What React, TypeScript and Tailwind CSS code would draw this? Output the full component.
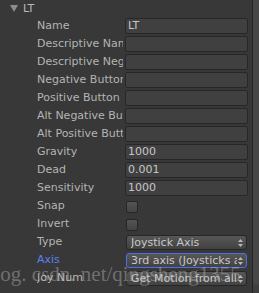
import React from "react";

const font = { fontFamily: '"DejaVu Sans", "Liberation Sans", sans-serif' };

function Arrows() {
  return (
    <svg width="5" height="8" viewBox="0 0 5 8" className="shrink-0">
      <path d="M2.5 0 L5 3 L0 3 Z" fill="#b8b8b8" />
      <path d="M0 5 L5 5 L2.5 8 Z" fill="#b8b8b8" />
    </svg>
  );
}

function Label({ text, active }: { text: string; active?: boolean }) {
  return (
    <div
      className={`w-[125px] h-[16px] shrink-0 overflow-hidden whitespace-nowrap pl-[37px] pr-[2px] text-[11px] leading-[16px] ${
        active ? "text-[#5b80f2]" : "text-[#b4b4b4]"
      }`}
    >
      <div className="overflow-hidden">{text}</div>
    </div>
  );
}

function TextRow({ label, value }: { label: string; value?: string }) {
  return (
    <div className="flex h-[18px] items-start">
      <Label text={label} />
      <div className="h-[16px] w-[123px] rounded-[2px] border border-[#272727] bg-[#404040] px-[2px] text-[11px] leading-[14px] text-[#c6c6c6] whitespace-nowrap overflow-hidden">
        {value}
      </div>
    </div>
  );
}

function CheckRow({ label }: { label: string }) {
  return (
    <div className="flex h-[18px] items-start">
      <Label text={label} />
      <div className="ml-[1px] mt-[3px] h-[12px] w-[12px] rounded-[2px] border border-[#262626] bg-gradient-to-b from-[#545454] to-[#444444]" />
    </div>
  );
}

function PopupRow({ label, value, active }: { label: string; value: string; active?: boolean }) {
  return (
    <div className="flex h-[18px] items-start">
      <Label text={label} active={active} />
      <div
        className={`ml-[1px] mt-[1px] flex h-[15px] w-[121px] items-center rounded-[3px] border bg-gradient-to-b from-[#575757] to-[#424242] pl-[4px] pr-[3px] ${
          active ? "border-[#4c6fe6]" : "border-[#262626]"
        }`}
      >
        <div className="flex-1 overflow-hidden whitespace-nowrap text-[11px] leading-[13px] text-[#c8c8c8]">{value}</div>
        <div className="ml-[1px]">
          <Arrows />
        </div>
      </div>
    </div>
  );
}

export default function App() {
  return (
    <div className="relative flex h-[293px] w-[259px] overflow-hidden bg-[#383838]" style={font}>
      <div className="flex-1">
        <div className="flex h-[18px] items-start pt-[4px]">
          <svg width="8" height="7" viewBox="0 0 8 7" className="ml-[10px] mt-[1px]">
            <path d="M0 0 L8 0 L4 7 Z" fill="#8c8c8c" />
          </svg>
          <span className="ml-[5px] text-[11px] leading-[9px] text-[#b8b8b8]">LT</span>
        </div>
        <TextRow label="Name" value="LT" />
        <TextRow label="Descriptive Name" />
        <TextRow label="Descriptive Negative Name" />
        <TextRow label="Negative Button" />
        <TextRow label="Positive Button" />
        <TextRow label="Alt Negative Button" />
        <TextRow label="Alt Positive Button" />
        <TextRow label="Gravity" value="1000" />
        <TextRow label="Dead" value="0.001" />
        <TextRow label="Sensitivity" value="1000" />
        <CheckRow label="Snap" />
        <CheckRow label="Invert" />
        <PopupRow label="Type" value="Joystick Axis" />
        <PopupRow label="Axis" value="3rd axis (Joysticks and Scrollwheel)" active />
        <PopupRow label="Joy Num" value="Get Motion from all Joysticks" />
      </div>
      <div className="w-[7px] border-l border-[#232323] bg-[#3e3e3e]">
        <div className="h-[285px] rounded-b-[3px] bg-[#474747]" />
      </div>
      <div
        className="pointer-events-none absolute left-[-16px] top-[262px] whitespace-pre text-[21px] leading-[24px] text-[rgba(200,200,200,0.4)]"
        style={{ fontFamily: '"Liberation Serif", serif' }}
      >
        blog. csdn. net/qingsheng1355
      </div>
    </div>
  );
}
